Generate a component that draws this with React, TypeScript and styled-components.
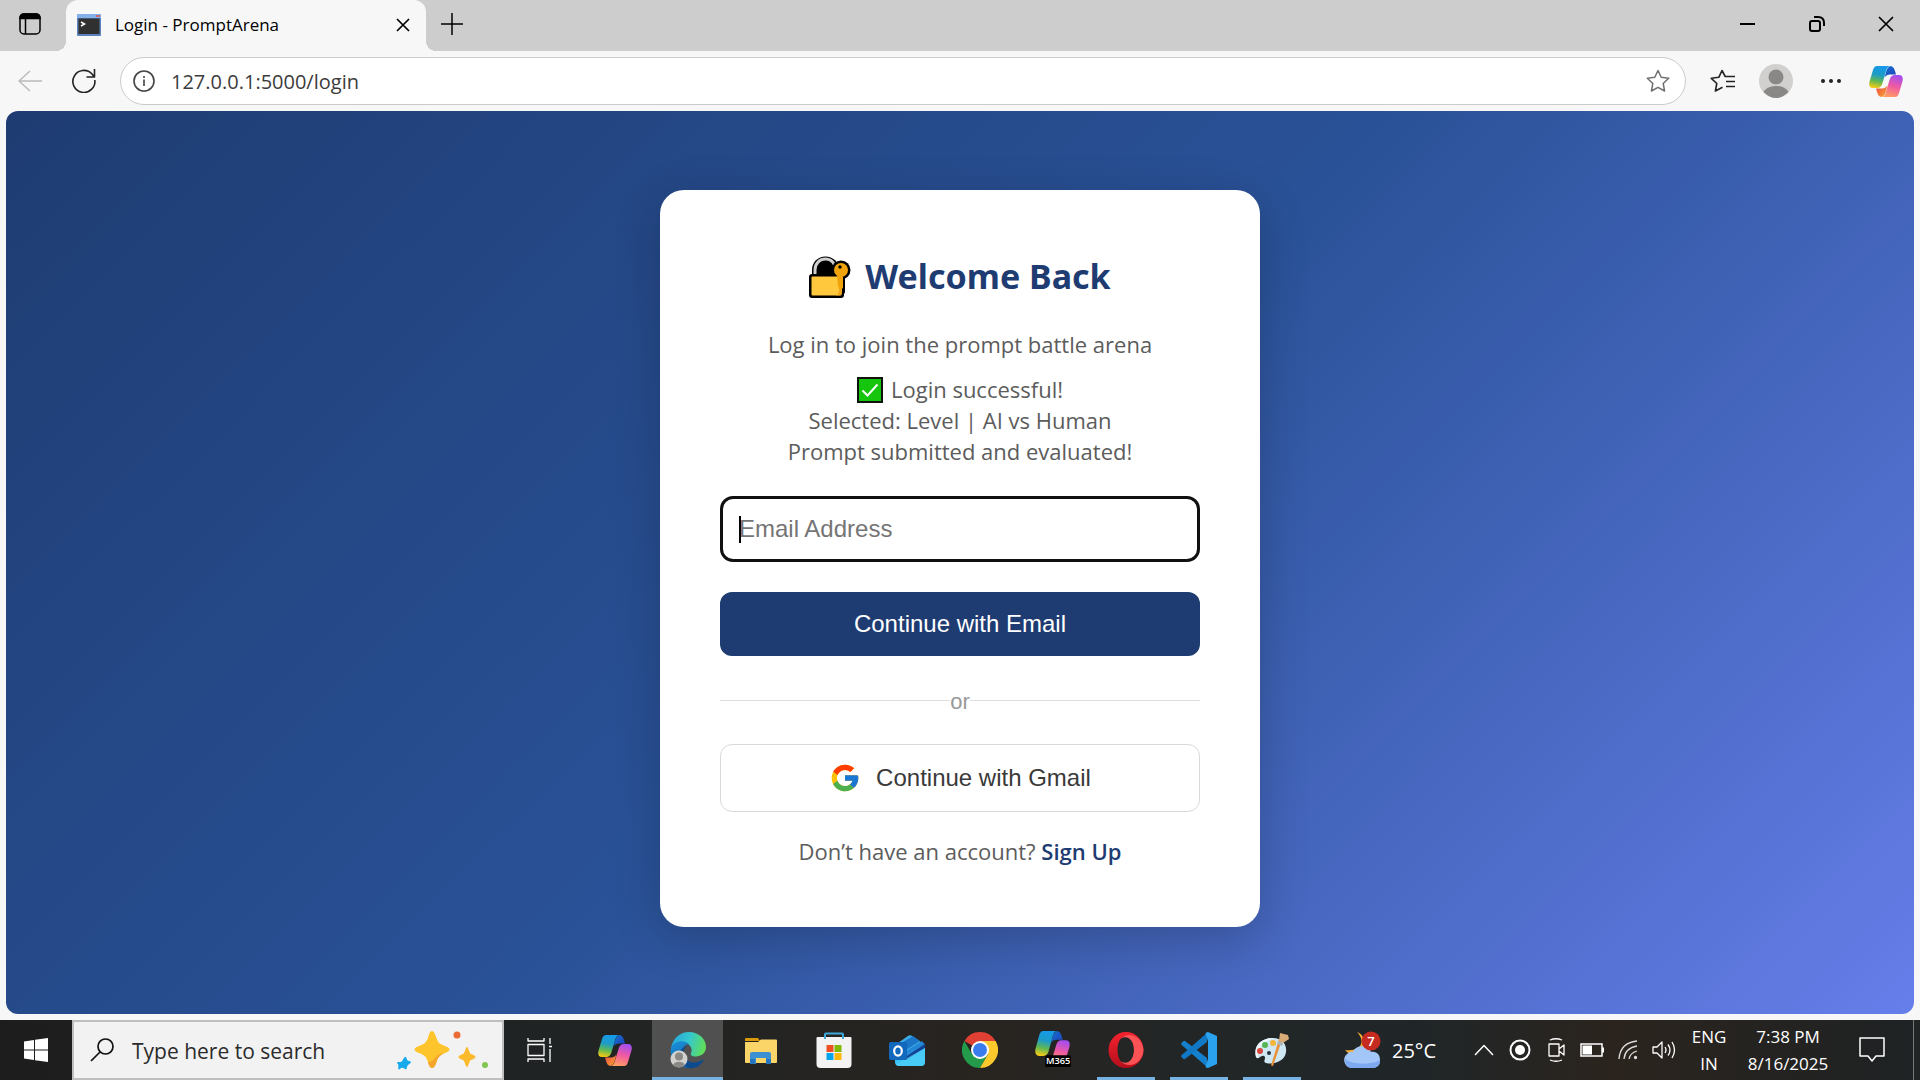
import React, { useId } from "react";
import styled, { createGlobalStyle } from "styled-components";
import { FcGoogle } from "react-icons/fc";

const ui = '"Open Sans", "Noto Sans", sans-serif';
const arial = '"Liberation Sans", Arial, sans-serif';

const GlobalStyle = createGlobalStyle`
  *, *::before, *::after { box-sizing: border-box; }
  body { margin: 0; font-family: ${ui}; }
  button { border: 0; padding: 0; background: none; font-family: inherit; color: inherit; cursor: pointer; }
  input { font-family: inherit; }
  svg { display: block; flex: none; }
`;

/* ---------- Browser chrome ---------- */

const Screen = styled.div`
  display: flex;
  flex-direction: column;
  min-height: 100vh;
  background: #f7f7f7;
`;

const TabStrip = styled.header`
  display: flex;
  height: 51px;
  background: #cdcdcd;
  color: #000;
`;

const IconButton = styled.button<{ $w: number }>`
  display: flex;
  align-items: center;
  justify-content: center;
  width: ${(p) => p.$w}px;
  height: 48px;
  flex: none;
`;

const Tab = styled.div`
  position: relative;
  display: flex;
  align-items: center;
  width: 360px;
  margin-left: 6px;
  padding: 0 16px 2px 11px;
  border-radius: 12px 12px 0 0;
  background: #f7f7f7;
  &::before,
  &::after {
    content: "";
    position: absolute;
    bottom: 0;
    width: 10px;
    height: 10px;
  }
  &::before {
    left: -10px;
    background: radial-gradient(circle at 0 0, transparent 10px, #f7f7f7 10px);
  }
  &::after {
    right: -10px;
    background: radial-gradient(circle at 100% 0, transparent 10px, #f7f7f7 10px);
  }
`;

const TabTitle = styled.span`
  flex: 1;
  margin-left: 14px;
  font-size: 17px;
  line-height: 22px;
`;

const WindowControls = styled.div`
  display: flex;
  margin-left: auto;
`;

const Toolbar = styled.nav`
  display: flex;
  align-items: center;
  height: 60px;
  padding: 0 6px 0 3px;
`;

const AddressBar = styled.div`
  display: flex;
  flex: 1;
  align-items: center;
  height: 48px;
  margin: 0 10px;
  padding-left: 12px;
  border: 1px solid #cbcbcb;
  border-radius: 24px;
  background: #fff;
`;

const AddressInput = styled.input`
  flex: 1;
  min-width: 0;
  margin-left: 16px;
  padding: 0;
  border: 0;
  outline: 0;
  background: transparent;
  color: #3c3c3c;
  font-size: 20px;
`;

/* ---------- Page ---------- */

const Page = styled.main`
  display: flex;
  flex: 1;
  align-items: center;
  justify-content: center;
  margin: 0 6px 6px;
  padding: 32px 20px 40px;
  border-radius: 12px;
  background: linear-gradient(135deg, #1e3c72 0%, #2a5298 50%, #667eea 100%);
`;

const Card = styled.section`
  width: 100%;
  max-width: 600px;
  padding: 60px;
  border-radius: 24px;
  background: #fff;
  box-shadow: 0 12px 48px rgba(0, 0, 0, 0.2);
  text-align: center;
`;

const Title = styled.h1`
  display: flex;
  align-items: center;
  justify-content: center;
  gap: 14px;
  margin: 0;
  color: #1e3c72;
  font-family: "Noto Sans", sans-serif;
  font-size: 34px;
  font-weight: 700;
  line-height: 53px;
`;

const Message = styled.p<{ $top: number }>`
  margin: ${(p) => p.$top}px 0 0;
  color: #5c5c5c;
  font-size: 22px;
  line-height: 31px;
`;

const StatusLine = styled.span`
  display: flex;
  align-items: center;
  justify-content: center;
  gap: 8px;
`;

const Form = styled.form`
  display: flex;
  flex-direction: column;
  margin-top: 29px;
  font-family: ${arial};
`;

const EmailField = styled.label`
  position: relative;
  display: flex;
`;

const EmailInput = styled.input`
  width: 100%;
  height: 66px;
  padding: 0 16px;
  border: 3px solid #101010;
  border-radius: 13px;
  outline: 0;
  background: #fff;
  caret-color: transparent;
  font-size: 24px;
  &::placeholder { color: #757575; }
`;

const Caret = styled.span`
  position: absolute;
  top: 20px;
  left: 19px;
  width: 2px;
  height: 27px;
  background: #000;
`;

const PrimaryButton = styled.button`
  height: 64px;
  margin-top: 30px;
  border-radius: 12px;
  background: #1e3c72;
  color: #fff;
  font-size: 24px;
`;

const Divider = styled.div`
  display: flex;
  align-items: center;
  margin: 30px 0;
  color: #999;
  font-size: 22px;
  line-height: 24px;
  &::before,
  &::after {
    content: "";
    flex: 1;
    height: 1px;
    background: #ddd;
  }
`;

const DividerLabel = styled.span`
  padding-top: 4px;
`;

const GmailButton = styled.button`
  display: flex;
  align-items: center;
  justify-content: center;
  gap: 15px;
  height: 68px;
  border: 1px solid #d9d9d9;
  border-radius: 12px;
  background: #fff;
  color: #3a3a3a;
  font-size: 24px;
`;

const SignUp = styled.a`
  color: #1e3c72;
  font-weight: 600;
  text-decoration: none;
`;

/* ---------- Taskbar ---------- */

const Taskbar = styled.footer`
  display: flex;
  height: 60px;
  background: linear-gradient(90deg, #1d1d1d 0, #212424 30%, #282420 52%, #222627 62%, #202628 74%, #2b241e 84%, #1e2224 100%);
  color: #fff;
`;

const TaskButton = styled.button<{ $w: number; $active?: boolean; $open?: boolean }>`
  display: flex;
  align-items: center;
  justify-content: center;
  flex: none;
  width: ${(p) => p.$w}px;
  background: ${(p) => (p.$active ? "#505050" : "transparent")};
  ${(p) =>
    (p.$active || p.$open) &&
    `background-image: linear-gradient(#76b2e2, #76b2e2);
     background-repeat: no-repeat;
     background-position: bottom center;
     background-size: ${p.$active ? "100%" : "58px"} 3px;`}
`;

const SearchBox = styled.label`
  display: flex;
  align-items: center;
  width: 432px;
  padding: 0 14px 0 16px;
  border: 2px solid #bfbfbf;
  background: #f2f2f2;
`;

const SearchInput = styled.input`
  flex: 1;
  min-width: 0;
  margin-left: 18px;
  padding: 2px 0 0;
  border: 0;
  outline: 0;
  background: transparent;
  font-size: 21px;
  &::placeholder { color: #2b2b2b; }
`;

const Apps = styled.div`
  display: flex;
  gap: 2px;
  margin-left: 4px;
`;

const Tray = styled.div`
  display: flex;
  margin-left: auto;
  padding-right: 16px;
  box-shadow: inset -6px 0 0 #222526, inset -7px 0 0 #777;
`;

const Weather = styled.button`
  display: flex;
  align-items: center;
  gap: 11px;
  margin-right: 30px;
  font-size: 20px;
`;

const TrayText = styled.button<{ $w: number }>`
  display: flex;
  flex-direction: column;
  align-items: center;
  justify-content: center;
  width: ${(p) => p.$w}px;
  font-size: 17px;
  line-height: 27px;
`;

/* ---------- Drawings ---------- */

const Copilot = ({ m365 = false, size = 34 }: { m365?: boolean; size?: number }) => {
  const id = useId();
  const left =
    "M8 0H22C18.500 0 17.500 3 16.500 7L13.500 17C12.500 20.500 11 22 8 22H4C.5 22-.5 19 .7 15L4 4C5 1 6 0 8 0Z";
  const fold = "M17 0H20C24 0 25 2 26 5L27 8.500H22C18 8.500 16.500 10 15.500 12L17 6C18 2.500 19 1 22 0Z";
  return (
    <svg width={size} height={(size * (m365 ? 35 : 31)) / 34} viewBox={m365 ? "0 0 35 36" : "0 0 34 31"}>
      <defs>
        <linearGradient id={id + "a"} x1="0.500" y1="0" x2="0.300" y2="1">
          <stop offset="0" stopColor="#1599ea" />
          <stop offset="0.400" stopColor="#1e9cc5" />
          <stop offset="0.700" stopColor="#64b94f" />
          <stop offset="1" stopColor="#f6ca16" />
        </linearGradient>
        <linearGradient id={id + "b"} x1="0" y1="0" x2="1" y2="1">
          <stop offset="0" stopColor="#1471d5" />
          <stop offset="1" stopColor="#203fb5" />
        </linearGradient>
        <linearGradient id={id + "c"} x1="0.700" y1="0" x2="0.400" y2="1">
          <stop offset="0" stopColor="#a24df2" />
          <stop offset="0.500" stopColor="#f05aa1" />
          <stop offset="1" stopColor="#ff9d62" />
        </linearGradient>
        <linearGradient id={id + "d"} x1="0" y1="0" x2="1" y2="1">
          <stop offset="0" stopColor="#f7a631" />
          <stop offset="1" stopColor="#ee4a42" />
        </linearGradient>
      </defs>
      <path d={fold} fill={`url(#${id}b)`} />
      {!m365 && (
        <g transform="rotate(180 17 15.500)">
          <path d={fold} fill={`url(#${id}d)`} />
        </g>
      )}
      <path d={left} fill={`url(#${id}a)`} transform={m365 ? "scale(1 1.100)" : undefined} />
      <path
        d="M26 31H12C15.500 31 16.500 28 17.500 24L20.500 14C21.500 10.500 23 9 26 9H30C33.500 9 34.500 12 33.300 16L30 27C29 30 28 31 26 31Z"
        fill={`url(#${id}c)`}
      />
      {m365 && (
        <>
          <rect x="10" y="23.500" width="25" height="11.500" rx="1.500" fill="#000" />
          <text x="22.500" y="32.500" textAnchor="middle" fontFamily="Open Sans, sans-serif" fontSize="9" fontWeight="600" fill="#fff">
            M365
          </text>
        </>
      )}
    </svg>
  );
};

const Edge = () => (
  <svg width="38" height="38" viewBox="0 0 38 38">
    <defs>
      <linearGradient id="edgeTop" x1="0" y1="0.300" x2="1" y2="0.500">
        <stop offset="0" stopColor="#27a5dc" />
        <stop offset="0.500" stopColor="#34c7cf" />
        <stop offset="1" stopColor="#62de55" />
      </linearGradient>
      <linearGradient id="edgeLeft" x1="0" y1="0" x2="0.500" y2="1">
        <stop offset="0" stopColor="#1b93d8" />
        <stop offset="1" stopColor="#0e5db0" />
      </linearGradient>
    </defs>
    <path d="M2 17C4 7 11 1 20 1C30 1 37 8 37 16C37 22 32 25.500 27 25.500C23 25.500 21 24 22 22C25 16 18 10 11 11C7 11.500 4 14 2 17Z" fill="url(#edgeTop)" />
    <path d="M2 17C5 10 14 8 20 13C14 13 12 20 14 26C16 32 23 35 34 29C29 37 20 39 12 35C4 31 .5 24 2 17Z" fill="url(#edgeLeft)" />
    <path d="M19 15C13 17 13 25 18 29C23 33 29 32 35 28C32 35 26 38 20 37C12 35 8 26 12 19C14 16 17 15 19 15Z" fill="#0d4b91" />
    <circle cx="10" cy="28" r="8.500" fill="#d2d1ce" />
    <circle cx="10" cy="25.500" r="4" fill="#8b8986" />
    <path d="M4 34C5 29.500 15 29.500 16 34C13 37 7 37 4 34Z" fill="#8b8986" />
  </svg>
);

const Folder = () => (
  <svg width="32" height="27" viewBox="0 0 32 27">
    <path d="M0 2Q0 1 1 1H13L15 4H0Z" fill="#d99b0c" />
    <path d="M0 5H13L16 2.500H31Q32 2.500 32 3.500V25Q32 26 31 26H1Q0 26 0 25Z" fill="#fbd568" />
    <path d="M5 27V17Q5 15 7 15H24Q26 15 26 17V27H21V21H11V27Z" fill="#3c91d2" />
    <path d="M5 22H10V27H5ZM21 22H26V27H21Z" fill="#2574bd" />
  </svg>
);

const Store = () => (
  <svg width="36" height="36" viewBox="0 0 36 36">
    <path d="M9 7V2.500Q9 1.500 10 1.500H26Q27 1.500 27 2.500V7" fill="none" stroke="#3fa9dc" strokeWidth="2" />
    <path d="M.5 6Q.5 5 1.500 5H34.500Q35.500 5 35.500 6V32Q35.500 36 31.500 36H4.500Q.5 36 .5 32Z" fill="#f3f3f3" />
    <path d="M9 2V7M27 2V7" stroke="#3fa9dc" strokeWidth="2" />
    <path d="M10.500 13H17.500V20H10.500Z" fill="#ee5024" />
    <path d="M18.500 13H25.500V20H18.500Z" fill="#80b900" />
    <path d="M10.500 21H17.500V28H10.500Z" fill="#08a4ec" />
    <path d="M18.500 21H25.500V28H18.500Z" fill="#fdb70b" />
  </svg>
);

const Outlook = () => (
  <svg width="36" height="31" viewBox="0 0 36 31">
    <path d="M6 10L19 1Q21-.3 23 1L36 10V20H6Z" fill="#3dafe8" />
    <path d="M14 7L24 1L31 6L14 17Z" fill="#1b76c8" />
    <path d="M18 19L36 8V15L18 25Z" fill="#123f91" />
    <path d="M17 16L33 6L36 10L18 22Z" fill="#2487d5" />
    <path d="M18 21L36 9V14L18 25Z" fill="#123f91" />
    <path d="M36 13V27Q36 31 32 31H10Q6 31 6 27V20L17 25Z" fill="#3bc3f4" />
    <path d="M7 29L36 13V27Q36 31 32 31H10Q8 31 7 29Z" fill="#54d0f8" opacity=".6" />
    <rect x="0" y="7" width="18" height="18" rx="2" fill="#1168bd" />
    <ellipse cx="9" cy="16" rx="3.800" ry="4.600" fill="none" stroke="#fff" strokeWidth="2.200" />
  </svg>
);

const Chrome = () => (
  <svg width="36" height="36" viewBox="0 0 36 36">
    <path d="M18 18L2.410 9A18 18 0 0 1 33.590 9Z" fill="#df4033" />
    <path d="M2.410 9A18 18 0 0 0 18 36L25.790 22.500L18 18L10.210 22.500Z" fill="#249b4b" />
    <path d="M33.590 9A18 18 0 0 1 18 36L25.790 22.500L18 9Z" fill="#fdc92c" />
    <circle cx="18" cy="18" r="9" fill="#fff" />
    <circle cx="18" cy="18" r="7" fill="#3a7cec" />
  </svg>
);

const Opera = () => (
  <svg width="36" height="36" viewBox="0 0 36 36">
    <defs>
      <linearGradient id="operaRing" x1="0" y1="0" x2="0" y2="1">
        <stop offset="0" stopColor="#f4232f" />
        <stop offset="1" stopColor="#b50e1c" />
      </linearGradient>
    </defs>
    <path fillRule="evenodd" d="M18 0A17.500 18 0 1 0 18 36A17.500 18 0 1 0 18 0ZM18 4C23 4 26 10 26 18S23 32 18 32S9.500 26 9.500 18S13 4 18 4Z" fill="url(#operaRing)" />
    <path d="M12 7C21-2 35 5 35.500 18C35 31 21 38 12 29C20 34 26 27 26 18S20 2 12 7Z" fill="#fb5355" />
  </svg>
);

const VsCode = () => (
  <svg width="36" height="36" viewBox="0 0 36 36">
    <path d="M26 26L4 9Q3 8.500 2 9.500L.5 11Q-.3 12 .7 13L26 35Z" fill="#1580cd" />
    <path d="M26 10L4 27Q3 27.500 2 26.500L.5 25Q-.3 24 .7 23L26 1Z" fill="#1078c4" />
    <path d="M27 0L36 4V32L27 36Q25 36 24.500 34.500L27 27V9L24.500 1.500Q25 0 27 0Z" fill="#2ba2f0" />
  </svg>
);

const Paint = () => (
  <svg width="36" height="36" viewBox="0 0 36 36">
    <path d="M2 25C-1 13 8 6 19 6C28 6 33 12 32 20C31 29 20 33 12 31C8 30 13 26 10 24C7 22 4 29 2 25Z" fill="#cfe6f3" />
    <path d="M2 25C-1 13 8 6 19 6C12 10 3 14 4 26Z" fill="#edf7fc" />
    <circle cx="6" cy="19" r="3" fill="#d8483f" />
    <circle cx="11" cy="13" r="3" fill="#56b752" />
    <circle cx="19" cy="11" r="3" fill="#f4b53a" />
    <circle cx="15" cy="21" r="2" fill="#25313a" />
    <path d="M28 8L19 34L17 33.500L25 7Z" fill="#e8933b" />
    <path d="M26 1L34 3L35 7L29 11L25 9Z" fill="#d9ab77" />
    <path d="M24 9L29 11L28 14L23 12Z" fill="#aab4ba" />
  </svg>
);

const SearchSparkles = () => (
  <svg width="92" height="42" viewBox="0 0 92 42">
    <path d="M36 2C38 2 39 5 40.500 9C42 14 44 15 49 17C55 19 55 22 49 24C44 26 42 28 40.500 33C38 41 34 41 32 33C30 27 28 26 23 24C17 22 17 19 23 17C28 15 30 14 32 9C33 5 34 2 36 2Z" fill="#fdc42b" />
    <path d="M49 24C44 26 42 28 40.500 33C38 41 34 41 32 33C38 34 39 24 49 24Z" fill="#f4a62c" />
    <path d="M71 18C72.500 18 73 24 75 25C81 27 81 29 75 31C73 32 72.500 38 71 38S69 32 67 31C61 29 61 27 67 25C69 24 69.500 18 71 18Z" fill="#fbb92c" />
    <path d="M9 28C11 27 10 32 13 32C17 33 14 34 12 36C10 38 12 41 9 40C7 39 6 38 4 40C1 42 3 37 2 35C-1 33 3 33 5 33C7 32 7 29 9 28Z" fill="#16a9ec" />
    <circle cx="61" cy="6" r="3.500" fill="#ec6a35" />
    <circle cx="89" cy="36" r="3" fill="#83c552" />
  </svg>
);

const WeatherIcon = () => (
  <svg width="38" height="38" viewBox="0 0 38 38">
    <path d="M14 1C22 9 20 21 2 19C6 25 18 25 21 17C23 10 20 3 14 1Z" fill="#f4ad35" />
    <path d="M8 37A8 8 0 0 1 4 23Q7 20 10 21C12 14 26 13 28 21C34 20 37 24 37 29Q37 37 29 37Z" fill="#a3c6f8" />
    <path d="M2 28C8 34 30 34 37 29Q37 37 29 37H8Q2 36 2 28Z" fill="#7ca9ef" />
    <circle cx="28" cy="10" r="9.500" fill="#c52b20" />
    <text x="28" y="15" textAnchor="middle" fontFamily="Open Sans, sans-serif" fontSize="13" fontWeight="600" fill="#fff">
      7
    </text>
  </svg>
);

const LockEmoji = () => (
  <svg width="42" height="42" viewBox="0 0 42 42" role="img" aria-label="Locked with key">
    <path d="M3 20V14C3 6 9 .5 16.500 .5S30 6 30 14V20Z" fill="#000" />
    <path d="M6 22V14C6 7 11 3 16.500 3C21 3 24 5.500 25.500 9" fill="none" stroke="#d0d0d0" strokeWidth="3" />
    <circle cx="32" cy="14" r="9.500" fill="#000" />
    <rect x="24" y="16" width="12" height="22" rx="2" fill="#000" />
    <rect x="0" y="18" width="35" height="24" rx="3" fill="#000" />
    <rect x="2.500" y="20.500" width="30" height="19" rx="1" fill="#ffc83d" />
    <path d="M27 20.500H33V36Q33 39.500 29 39.500H27Q30 38 30 34V22Z" fill="#f2a51c" />
    <circle cx="32" cy="14" r="7" fill="#f0a30a" />
    <path d="M28 18H34V32L31 34L29 30Z" fill="#f0a30a" />
    <circle cx="31" cy="11" r="1.700" fill="#000" />
  </svg>
);

const CheckEmoji = () => (
  <svg width="26" height="26" viewBox="0 0 26 26" role="img" aria-label="Success">
    <rect x="1" y="1" width="24" height="24" fill="#16c60c" stroke="#111" strokeWidth="2" />
    <path d="M5.500 13.500L10.500 18.500L20.500 7.500" fill="none" stroke="#fff" strokeWidth="2" />
  </svg>
);

const Line = ({
  w,
  h,
  d,
  color = "currentColor",
  sw = 2,
}: {
  w: number;
  h: number;
  d: string;
  color?: string;
  sw?: number;
}) => (
  <svg width={w} height={h} viewBox={`0 0 ${w} ${h}`} fill="none" stroke={color} strokeWidth={sw} strokeLinejoin="round">
    <path d={d} />
  </svg>
);

const starPath = "M12 1.500L15.200 8.300L22.700 9.300L17.200 14.500L18.600 22L12 18.300L5.400 22L6.800 14.500L1.300 9.300L8.800 8.300Z";

export default function App() {
  return (
    <>
      <GlobalStyle />
      <Screen>
        <TabStrip>
          <IconButton $w={60} aria-label="Tab actions">
            <svg width="22" height="22" viewBox="0 0 22 22" fill="none" stroke="#000" strokeWidth="1.500">
              <rect x="1" y="1" width="20" height="20" rx="4" />
              <path d="M1 5Q1 1 5 1H17Q21 1 21 5V5.500H1Z" fill="#000" />
              <path d="M6.500 6V21" />
            </svg>
          </IconButton>
          <Tab>
            <svg width="24" height="22" viewBox="0 0 24 22">
              <rect width="24" height="22" rx="1" fill="#5b82bd" />
              <rect x="0" y="0" width="24" height="4" fill="#86b0ea" />
              <rect x="19" y="1" width="4" height="2" fill="#c56a72" />
              <rect x="1.500" y="4.500" width="21" height="15.500" fill="#303030" />
              <path d="M4 8L7.500 10L4 12" fill="none" stroke="#fff" strokeWidth="1.500" />
            </svg>
            <TabTitle>Login - PromptArena</TabTitle>
            <button aria-label="Close tab">
              <Line w={14} h={14} d="M1 1L13 13M13 1L1 13" sw={1.7} />
            </button>
          </Tab>
          <IconButton $w={52} aria-label="New tab">
            <Line w={22} h={22} d="M11 0V22M0 11H22" sw={1.5} />
          </IconButton>
          <WindowControls>
            <IconButton $w={69} aria-label="Minimise">
              <Line w={15} h={16} d="M0 8H15" />
            </IconButton>
            <IconButton $w={69} aria-label="Restore">
              <Line w={16} h={16} d="M3 5H9Q11 5 11 7V13Q11 15 9 15H3Q1 15 1 13V7Q1 5 3 5ZM5 1H9Q15 1 15 7V10" />
            </IconButton>
            <IconButton $w={69} aria-label="Close window">
              <Line w={16} h={16} d="M1 1L15 15M15 1L1 15" sw={1.7} />
            </IconButton>
          </WindowControls>
        </TabStrip>

        <Toolbar>
          <IconButton $w={54} aria-label="Back">
            <Line w={24} h={22} d="M24 11H1M12 1L1 11L12 21" color="#bbb" sw={1.5} />
          </IconButton>
          <IconButton $w={53} aria-label="Refresh">
            <Line w={24} h={24} d="M22.800 11A11 11 0 1 1 20 5L22 7.500M22.500 0V8H14.500" color="#222" sw={1.6} />
          </IconButton>
          <AddressBar>
            <button aria-label="Site information">
              <Line w={22} h={22} d="M11 1A10 10 0 1 0 11 21A10 10 0 1 0 11 1ZM11 9.500V16M11 6V8" color="#444" sw={1.6} />
            </button>
            <AddressInput aria-label="Address" defaultValue="127.0.0.1:5000/login" />
            <IconButton $w={54} aria-label="Add to favourites">
              <Line w={24} h={24} d={starPath} color="#707070" sw={1.5} />
            </IconButton>
          </AddressBar>
          <IconButton $w={52} aria-label="Favourites">
            <Line
              w={25}
              h={24}
              d="M17.500 7.500L15.200 7.500L12 1.500L8.800 8.300L1.300 9.300L6.800 14.500L5.400 22L12.500 18.300M15 7.500H25M16 12.500H25M16 17.500H25"
              color="#222"
              sw={1.6}
            />
          </IconButton>
          <IconButton $w={55} aria-label="Profile">
            <svg width="34" height="34" viewBox="0 0 34 34">
              <circle cx="17" cy="17" r="17" fill="#d2d0ce" />
              <circle cx="17" cy="13" r="7.500" fill="#8a8886" />
              <path d="M4.500 28C9 20 25 20 29.500 28Q17 40 4.500 28Z" fill="#8a8886" />
            </svg>
          </IconButton>
          <IconButton $w={55} aria-label="More">
            <svg width="20" height="4" viewBox="0 0 20 4" fill="#222">
              <circle cx="2" cy="2" r="2" />
              <circle cx="10" cy="2" r="2" />
              <circle cx="18" cy="2" r="2" />
            </svg>
          </IconButton>
          <IconButton $w={56} aria-label="Copilot">
            <Copilot />
          </IconButton>
        </Toolbar>

        <Page>
          <Card>
            <Title>
              <LockEmoji />
              Welcome Back
            </Title>
            <Message $top={26}>Log in to join the prompt battle arena</Message>
            <Message $top={14} role="status">
              <StatusLine>
                <CheckEmoji />
                Login successful!
              </StatusLine>
              <StatusLine>Selected: Level | AI vs Human</StatusLine>
              <StatusLine>Prompt submitted and evaluated!</StatusLine>
            </Message>
            <Form onSubmit={(e: React.FormEvent) => e.preventDefault()}>
              <EmailField>
                <EmailInput type="email" placeholder="Email Address" aria-label="Email Address" autoFocus />
                <Caret />
              </EmailField>
              <PrimaryButton type="submit">Continue with Email</PrimaryButton>
              <Divider>
                <DividerLabel>or</DividerLabel>
              </Divider>
              <GmailButton type="button">
                <FcGoogle size={32} />
                Continue with Gmail
              </GmailButton>
            </Form>
            <Message $top={24}>
              Don’t have an account? <SignUp href="#signup">Sign Up</SignUp>
            </Message>
          </Card>
        </Page>

        <Taskbar>
          <TaskButton $w={72} aria-label="Start">
            <svg width="24" height="24" viewBox="0 0 24 24" fill="#fff">
              <path d="M0 3.500L10 2V11.500H0ZM11 1.800L24 0V11.500H11ZM0 12.500H10V22L0 20.500ZM11 12.500H24V24L11 22.200Z" />
            </svg>
          </TaskButton>
          <SearchBox>
            <Line w={24} h={24} d="M15.500 1A7.500 7.500 0 1 0 15.500 16A7.500 7.500 0 1 0 15.500 1ZM10 14L1 23" color="#111" sw={1.7} />
            <SearchInput placeholder="Type here to search" aria-label="Search" />
            <SearchSparkles />
          </SearchBox>
          <TaskButton $w={71} aria-label="Task view">
            <Line w={25} h={24} d="M1 0V3H17V0M1 6.500H17V17.500H1ZM1 24V21H17V24M23 0V6M23 11V24M22 8.500H25" sw={1.3} />
          </TaskButton>
          <Apps>
            <TaskButton $w={71} aria-label="Copilot">
              <Copilot />
            </TaskButton>
            <TaskButton $w={71} $active aria-label="Edge">
              <Edge />
            </TaskButton>
            <TaskButton $w={71} aria-label="File Explorer">
              <Folder />
            </TaskButton>
            <TaskButton $w={71} aria-label="Store">
              <Store />
            </TaskButton>
            <TaskButton $w={71} aria-label="Outlook">
              <Outlook />
            </TaskButton>
            <TaskButton $w={71} aria-label="Chrome">
              <Chrome />
            </TaskButton>
            <TaskButton $w={71} aria-label="Microsoft 365 Copilot">
              <Copilot m365 size={36} />
            </TaskButton>
            <TaskButton $w={71} $open aria-label="Opera">
              <Opera />
            </TaskButton>
            <TaskButton $w={71} $open aria-label="Visual Studio Code">
              <VsCode />
            </TaskButton>
            <TaskButton $w={71} $open aria-label="Paint">
              <Paint />
            </TaskButton>
          </Apps>
          <Tray>
            <Weather>
              <WeatherIcon />
              25°C
            </Weather>
            <TaskButton $w={36} aria-label="Show hidden icons">
              <Line w={20} h={12} d="M1 11L10 1.500L19 11" sw={1.5} />
            </TaskButton>
            <TaskButton $w={36} aria-label="Recording">
              <svg width="22" height="22" viewBox="0 0 22 22">
                <circle cx="11" cy="11" r="9.500" fill="none" stroke="#fff" strokeWidth="2" />
                <circle cx="11" cy="11" r="5" fill="#fff" />
              </svg>
            </TaskButton>
            <TaskButton $w={36} aria-label="Meet now">
              <Line w={18} h={24} d="M2 6H12V18H2ZM12 11L17 7V17L12 13M3 2Q9-.5 15 2M3 22Q9 24.500 15 22" sw={1.3} />
            </TaskButton>
            <TaskButton $w={36} aria-label="Battery">
              <svg width="24" height="14" viewBox="0 0 24 14">
                <path d="M1 1H22V13H1Z" fill="none" stroke="#fff" strokeWidth="1.500" />
                <path d="M2.500 2.500H12V11.500H2.500ZM22 4.500H24V9.500H22Z" fill="#fff" />
              </svg>
            </TaskButton>
            <TaskButton $w={36} aria-label="Network">
              <svg width="20" height="20" viewBox="0 0 20 20" fill="none" stroke="#ddd" strokeWidth="1.300">
                <path d="M1 19Q2 3 19 1M6 19Q7 8 19 6M11 19Q12 13 19 11" />
                <circle cx="17.500" cy="17.500" r="1" fill="#fff" />
              </svg>
            </TaskButton>
            <TaskButton $w={36} aria-label="Volume">
              <Line w={24} h={20} d="M1 7H5L10 2V18L5 13H1ZM13 7Q15 10 13 13M16 4.500Q20 10 16 15.500M20 2Q25 10 20 18" sw={1.3} />
            </TaskButton>
            <TrayText $w={54}>
              <span>ENG</span>
              <span>IN</span>
            </TrayText>
            <TrayText $w={104}>
              <span>7:38 PM</span>
              <span>8/16/2025</span>
            </TrayText>
            <TaskButton $w={64} aria-label="Notifications">
              <Line w={26} h={26} d="M1 1H25V19H17L13 24L9 19H1Z" sw={1.5} />
            </TaskButton>
          </Tray>
        </Taskbar>
      </Screen>
    </>
  );
}
